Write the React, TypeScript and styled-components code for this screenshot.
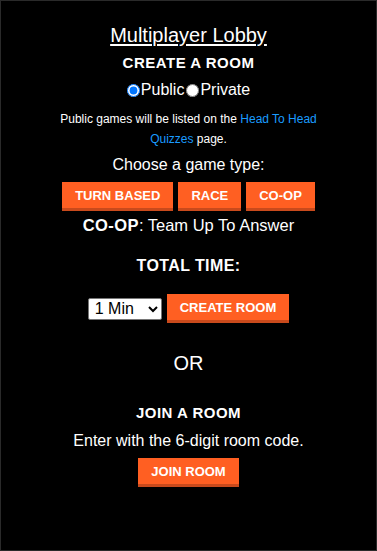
import React, { useState } from "react";
import styled, { createGlobalStyle } from "styled-components";

const Global = createGlobalStyle`
  html, body { margin: 0; padding: 0; background: #000; }
  body { font-family: "Liberation Sans", Arial, sans-serif; color: #fff; }
`;

const Page = styled.div`
  box-sizing: border-box;
  width: 377px;
  height: 551px;
  background: #000;
  border: 1px solid #2a2a2a;
  display: flex;
  flex-direction: column;
  align-items: center;
  text-align: center;
  padding-top: 22px;
`;

const Title = styled.h1`
  margin: 0;
  font-size: 20px;
  font-weight: normal;
  text-decoration: underline;
  text-underline-offset: 2px;
  line-height: 24px;
`;

const Heading = styled.h2<{ $mt?: number }>`
  margin: ${(p) => p.$mt ?? 0}px 0 0;
  font-size: 15px;
  font-weight: bold;
  letter-spacing: 0.5px;
  line-height: 18px;
`;

const RadioRow = styled.div`
  margin-top: 9px;
  display: flex;
  align-items: center;
  gap: 2px;
  font-size: 16px;
  line-height: 18px;
`;

const RadioLabel = styled.label`
  display: flex;
  align-items: center;
  cursor: pointer;
`;

const Radio = styled.input`
  margin: 0 1px 0 0;
  width: 13px;
  height: 13px;
  accent-color: #0075ff;
`;

const Info = styled.p`
  margin: 10px 0 0;
  width: 290px;
  font-size: 12px;
  line-height: 20px;
`;

const Link = styled.a`
  color: #1a9cff;
  text-decoration: none;
`;

const Text = styled.p<{ $mt?: number; $size?: number }>`
  margin: ${(p) => p.$mt ?? 0}px 0 0;
  font-size: ${(p) => p.$size ?? 16}px;
  line-height: 20px;
`;

const Strong = styled.b`
  letter-spacing: 0.4px;
`;

const ButtonRow = styled.div<{ $mt?: number }>`
  margin-top: ${(p) => p.$mt ?? 0}px;
  display: flex;
  align-items: center;
  gap: 5px;
`;

const Button = styled.button`
  box-sizing: border-box;
  height: 29px;
  padding: 0 13px;
  border: none;
  border-bottom: 3px solid #c94a1c;
  background: #ff5f22;
  color: #fff;
  font-family: "Liberation Sans", Arial, sans-serif;
  font-size: 13px;
  font-weight: bold;
  cursor: pointer;
`;

const Select = styled.select`
  height: 22px;
  width: 74px;
  font-family: "Liberation Sans", Arial, sans-serif;
  font-size: 16px;
  border: 1px solid #767676;
  border-radius: 2px;
  background: #fff;
  color: #000;
  padding: 0 0 0 2px;
`;

const Or = styled.div`
  margin-top: 28px;
  font-size: 20px;
  line-height: 24px;
`;

export default function App() {
  const [mode, setMode] = useState("public");
  return (
    <>
      <Global />
      <Page>
        <Title>Multiplayer Lobby</Title>
        <Heading $mt={7}>CREATE A ROOM</Heading>
        <RadioRow>
          <RadioLabel>
            <Radio type="radio" name="vis" checked={mode === "public"} onChange={() => setMode("public")} />
            Public
          </RadioLabel>
          <RadioLabel>
            <Radio type="radio" name="vis" checked={mode === "private"} onChange={() => setMode("private")} />
            Private
          </RadioLabel>
        </RadioRow>
        <Info>
          Public games will be listed on the <Link href="#">Head To Head Quizzes</Link> page.
        </Info>
        <Text $mt={6}>Choose a game type:</Text>
        <ButtonRow $mt={7}>
          <Button>TURN BASED</Button>
          <Button>RACE</Button>
          <Button>CO-OP</Button>
        </ButtonRow>
        <Text $mt={4} $size={16.5}>
          <Strong>CO-OP</Strong>: Team Up To Answer
        </Text>
        <Text $mt={21}>
          <Strong>TOTAL TIME:</Strong>
        </Text>
        <ButtonRow $mt={18}>
          <Select defaultValue="1">
            <option value="1">1 Min</option>
            <option value="2">2 Min</option>
            <option value="3">3 Min</option>
          </Select>
          <Button>CREATE ROOM</Button>
        </ButtonRow>
        <Or>OR</Or>
        <Heading $mt={29}>JOIN A ROOM</Heading>
        <Text $mt={9}>Enter with the 6-digit room code.</Text>
        <ButtonRow $mt={7}>
          <Button>JOIN ROOM</Button>
        </ButtonRow>
      </Page>
    </>
  );
}
